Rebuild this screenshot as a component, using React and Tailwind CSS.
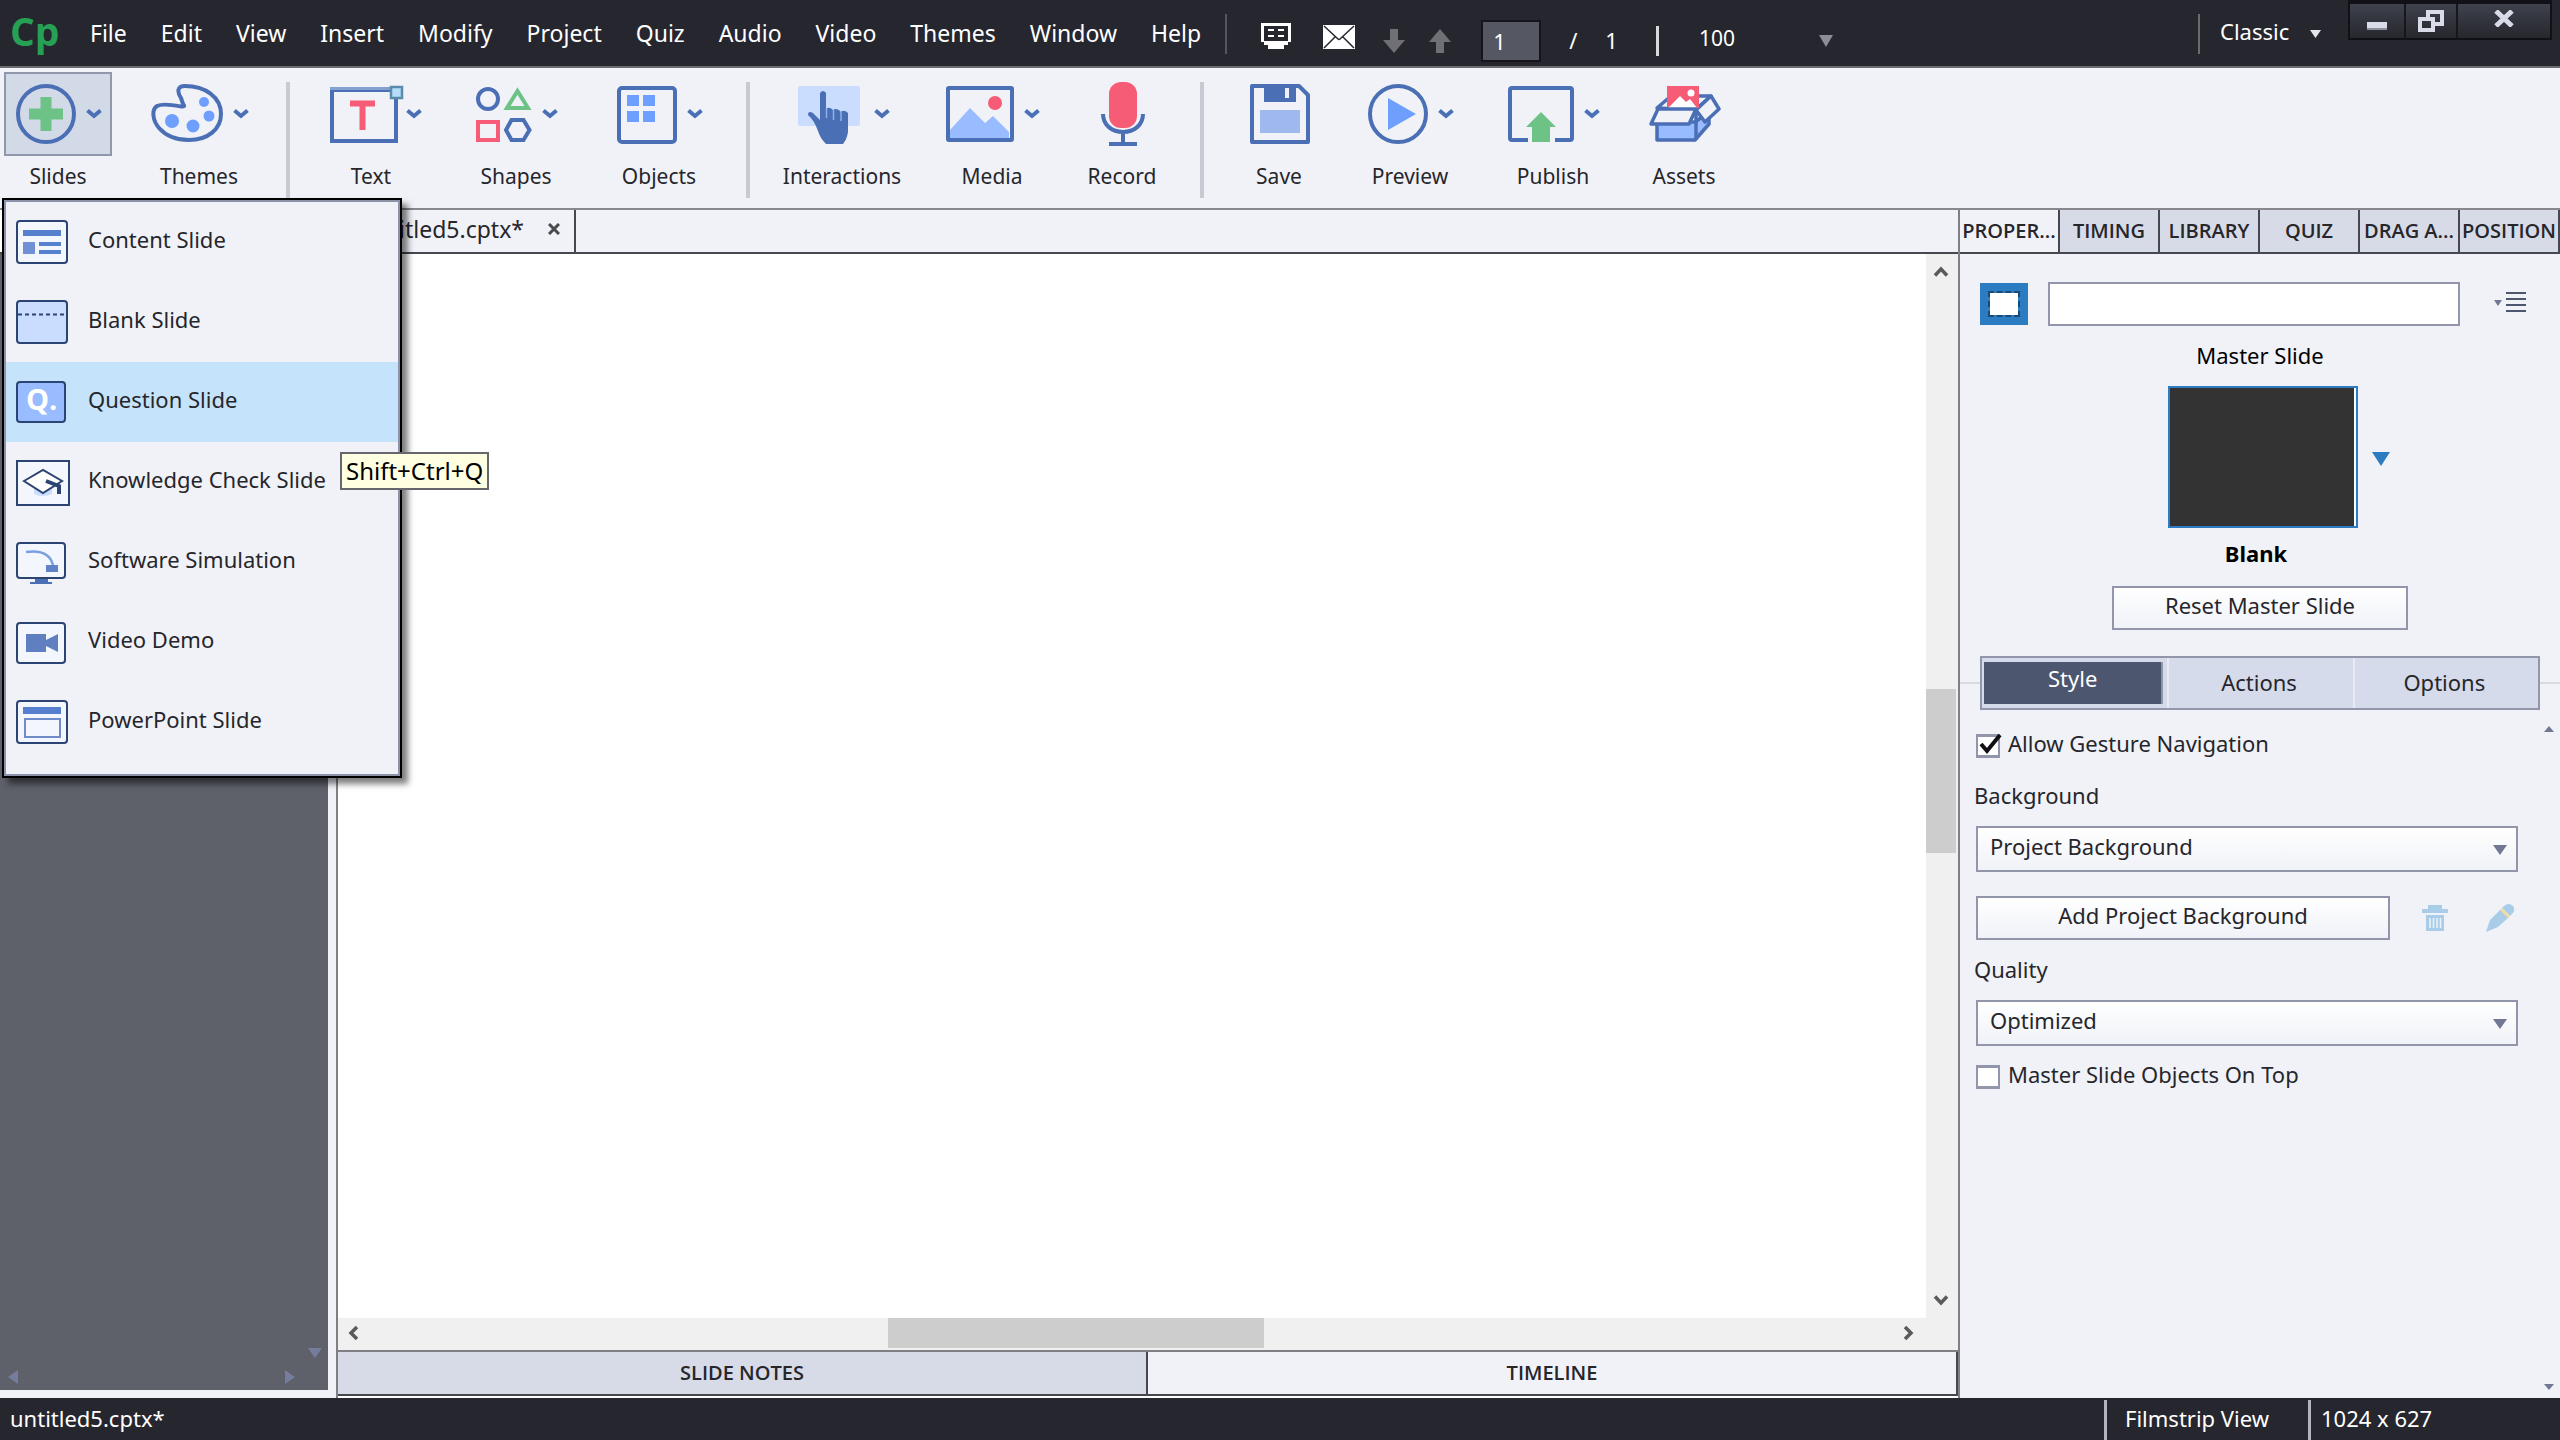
import React from "react";

const MENUS = ["File", "Edit", "View", "Insert", "Modify", "Project", "Quiz", "Audio", "Video", "Themes", "Window", "Help"];
const PANEL_TABS = ["PROPER...", "TIMING", "LIBRARY", "QUIZ", "DRAG A...", "POSITION"];

const Chevron = () => (
  <svg width="16" height="12" viewBox="0 0 16 12" className="shrink-0" fill="none" stroke="#4a6fb5" strokeWidth="4">
    <path d="M1.500 2.500 L8 8 L14.500 2.500" />
  </svg>
);

const Triangle = ({ className = "", dir = "down", w = 12, h = 8 }) => (
  <svg width={w} height={h} viewBox="0 0 10 10" preserveAspectRatio="none" className={className} fill="currentColor">
    <path d={{ down: "M0 0H10L5 10Z", up: "M0 10H10L5 0Z", left: "M10 0V10L0 5Z", right: "M0 0V10L10 5Z" }[dir]} />
  </svg>
);

const ScrollArrow = ({ dir }) => (
  <svg width="16" height="16" viewBox="0 0 16 16" fill="none" stroke="#5a5a5a" strokeWidth="3.500">
    <path d={{ up: "M2 11.500L8 5L14 11.500", down: "M2 4.500L8 11L14 4.500", left: "M11 2L5 8L11 14", right: "M5 2L11 8L5 14" }[dir]} />
  </svg>
);

/* Toolbar drawings */
const SlidesIcon = () => (
  <svg width="60" height="60" viewBox="0 0 60 60">
    <circle cx="30" cy="30" r="28" fill="none" stroke="#4a6fb5" strokeWidth="4" />
    <path d="M30 13V47M13 30H47" stroke="#6dc286" strokeWidth="11" />
  </svg>
);
const ThemesIcon = () => (
  <svg width="72" height="60" viewBox="0 0 72 60">
    <path d="M32 20C34 22 33 23 30 22.500C22 21 12 19 6 22C0 26 2 37 8 44C15 52 26 56 38 56C57 56 70 45 70 30C70 13 54 2 34 2C26 2 26 8 30 14Z" fill="none" stroke="#4a6fb5" strokeWidth="4" />
    <g fill="#6e9fff">
      <circle cx="21" cy="37" r="7" />
      <circle cx="42" cy="42" r="6.500" />
      <circle cx="58" cy="32" r="5.500" />
      <circle cx="53" cy="18" r="5" />
    </g>
  </svg>
);
const TextIcon = () => (
  <svg width="66" height="60" viewBox="0 0 66 60" className="overflow-visible">
    <rect x="2" y="6" width="64" height="51" fill="none" stroke="#4a6fb5" strokeWidth="4" />
    <path d="M0 4.500H62" stroke="#86a0d0" strokeWidth="3" />
    <rect x="61" y="3" width="11" height="11" fill="#b5dcf8" stroke="#5a8bab" strokeWidth="2.500" />
    <path d="M20 19.500H45M32.500 18V46" stroke="#f65c75" strokeWidth="6" />
  </svg>
);
const ShapesIcon = () => (
  <svg width="56" height="60" viewBox="0 0 56 60" fill="none" strokeWidth="4">
    <circle cx="12" cy="15" r="10" stroke="#4a6fb5" />
    <path d="M41.500 7L52 24H31Z" stroke="#6dc286" />
    <rect x="2" y="38" width="20" height="18" stroke="#f65c75" />
    <path d="M35.500 36H47.500L53.500 46L47.500 56H35.500L30 46Z" stroke="#4a6fb5" />
  </svg>
);
const ObjectsIcon = () => (
  <svg width="60" height="60" viewBox="0 0 60 60">
    <rect x="2" y="4" width="56" height="54" rx="3" fill="none" stroke="#4a6fb5" strokeWidth="4" />
    <path d="M10 11H22V22H10ZM26 11H38V22H26ZM10 27H22V38H10ZM26 27H38V38H26Z" fill="#6e9fff" />
  </svg>
);
const HandIcon = () => (
  <svg width="66" height="60" viewBox="0 0 66 60">
    <rect x="0" y="2" width="62" height="40" rx="2" fill="#cbddff" />
    <path d="M22 9Q25 5 28 9V25Q31 22 35 26Q39 23 43 28Q46 25 50 29V48Q49 55 45 60H28Q22 54 20 47Q16 36 10 31Q10 26 15 29L22 36Z" fill="#4a6fb5" />
    <path d="M28.500 24V34M35.500 26V36M43 28V37" stroke="#8fb0e8" strokeWidth="1.500" />
  </svg>
);
const MediaIcon = () => (
  <svg width="68" height="60" viewBox="0 0 68 60">
    <path d="M4 46L24 24L39 39L47 32L63 48V54H4Z" fill="#99bbff" />
    <circle cx="49" cy="19" r="7" fill="#f65c75" />
    <rect x="2" y="4" width="64" height="52" rx="1" fill="none" stroke="#4a6fb5" strokeWidth="4" />
  </svg>
);
const RecordIcon = () => (
  <svg width="44" height="66" viewBox="0 0 44 66">
    <rect x="8" y="1" width="28" height="46" rx="12" fill="#f65c75" />
    <path d="M2 33C2 44 11 51 22 51S42 44 42 33M22 51V63M8 63H36" fill="none" stroke="#4a6fb5" strokeWidth="4" />
  </svg>
);
const SaveIcon = () => (
  <svg width="60" height="60" viewBox="0 0 60 60">
    <path d="M2 2H49L58 11V58H2Z" fill="none" stroke="#4a6fb5" strokeWidth="4" strokeLinejoin="round" />
    <rect x="14" y="2" width="32" height="16" fill="#4a6fb5" />
    <rect x="35" y="4" width="4" height="10" fill="#eef1fa" />
    <rect x="10" y="26" width="40" height="23" fill="#9fb9ee" />
  </svg>
);
const PreviewIcon = () => (
  <svg width="60" height="60" viewBox="0 0 60 60">
    <circle cx="30" cy="30" r="28" fill="none" stroke="#4a6fb5" strokeWidth="4" />
    <path d="M20 14L48 30L20 46Z" fill="#6e9fff" />
  </svg>
);
const PublishIcon = () => (
  <svg width="66" height="60" viewBox="0 0 66 60">
    <path d="M20 56H4Q2 56 2 54V6Q2 4 4 4H62Q64 4 64 6V54Q64 56 62 56H47" fill="none" stroke="#4a6fb5" strokeWidth="4" />
    <path d="M33 28L48 43H42V58H24V43H18Z" fill="#6dc286" />
  </svg>
);
const AssetsIcon = () => (
  <svg width="72" height="60" viewBox="0 0 72 60" strokeLinejoin="round">
    <path d="M8 38H46L60 28V40L46 56H8Z" fill="#99bbff" stroke="#4a6fb5" strokeWidth="3.500" />
    <path d="M8 24L22 12H62L46 26Z" fill="#f0f2f8" stroke="#4a6fb5" strokeWidth="3.500" />
    <path d="M62 12L70 25L56 38L47 26Z" fill="#f0f2f8" stroke="#4a6fb5" strokeWidth="3.500" />
    <path d="M18 2H50V24H18Z" fill="#f65c75" />
    <path d="M19 24L31 12L37 18L41 15L48 24Z" fill="#fff" />
    <circle cx="42" cy="9" r="3.500" fill="#fff" />
    <path d="M9 25H47L40 40H2Z" fill="#f0f2f8" stroke="#4a6fb5" strokeWidth="3.500" />
    <path d="M47 26V56" stroke="#4a6fb5" strokeWidth="3.500" />
  </svg>
);

const TOOLS = [
  { label: "Slides", Icon: SlidesIcon, width: "w-[108px]", chevron: true, active: true },
  { label: "Themes", Icon: ThemesIcon, width: "w-[174px]", chevron: true },
  { divider: "mr-0" },
  { label: "Text", Icon: TextIcon, width: "w-[162px]", chevron: true, inset: "pl-2.5" },
  { label: "Shapes", Icon: ShapesIcon, width: "w-32", chevron: true },
  { label: "Objects", Icon: ObjectsIcon, width: "w-[158px]", chevron: true },
  { divider: "ml-2" },
  { label: "Interactions", Icon: HandIcon, width: "w-[184px]", chevron: true, inset: "pl-1" },
  { label: "Media", Icon: MediaIcon, width: "w-[116px]", chevron: true },
  { label: "Record", Icon: RecordIcon, width: "w-36" },
  { divider: "ml-1.5" },
  { label: "Save", Icon: SaveIcon, width: "w-[150px]" },
  { label: "Preview", Icon: PreviewIcon, width: "w-28", chevron: true },
  { label: "Publish", Icon: PublishIcon, width: "w-[174px]", chevron: true },
  { label: "Assets", Icon: AssetsIcon, width: "w-[88px]" },
];

/* Slide menu drawings */
const Frame = ({ children, fill = "#f4f6fd" }) => (
  <svg width="54" height="46" viewBox="0 0 54 46">
    <rect x="1" y="1" width="50" height="42" rx="3" fill={fill} stroke="#2b4474" strokeWidth="2" />
    {children}
  </svg>
);
const ContentGlyph = () => (
  <Frame>
    <path d="M7 10H45V16H7ZM23 22H45V26H23ZM23 30H45V34H23Z" fill="#567fce" />
    <path d="M7 22H19V34H7Z" fill="#7190d2" />
  </Frame>
);
const BlankGlyph = () => (
  <Frame fill="#cbddff">
    <path d="M2 14.500H50" stroke="#2b4474" strokeWidth="2" strokeDasharray="4 3" />
  </Frame>
);
const QuestionGlyph = () => (
  <svg width="54" height="46" viewBox="0 0 54 46">
    <rect x="1" y="2" width="48" height="40" rx="3" fill="#99bbff" stroke="#2b4474" strokeWidth="2" />
    <text x="10" y="30" fontFamily="Open Sans, sans-serif" fontSize="29" fontWeight="700" fill="#fff">Q.</text>
  </svg>
);
const CapGlyph = () => (
  <svg width="54" height="46" viewBox="0 0 54 46">
    <rect x="1" y="1" width="52" height="44" fill="#f4f6fd" stroke="#2b4474" strokeWidth="2" />
    <path d="M18 27H36V34Q27 38 18 34Z" fill="#cbddff" />
    <path d="M8 21L27 10L46 21L27 33Z" fill="#fff" stroke="#2b4474" strokeWidth="2" />
    <path d="M30 21L43 26V34" fill="none" stroke="#2b4474" strokeWidth="4" />
  </svg>
);
const SimulationGlyph = () => (
  <svg width="54" height="46" viewBox="0 0 54 46">
    <rect x="1" y="3" width="48" height="35" rx="3" fill="#f4f6fd" stroke="#2b4474" strokeWidth="2" />
    <path d="M10 12C24 10 34 13 37 25" fill="none" stroke="#7ba0e2" strokeWidth="2.500" />
    <path d="M30 25H42V32H30Z" fill="#5f82c4" />
    <path d="M19 39H32V42H36V44H14V42H19Z" fill="#4a6fb5" />
  </svg>
);
const VideoGlyph = () => (
  <svg width="54" height="46" viewBox="0 0 54 46">
    <rect x="1" y="3" width="48" height="40" rx="3" fill="#f4f6fd" stroke="#2b4474" strokeWidth="2" />
    <path d="M10 14H30V20L42 14V32L30 26V32H10Z" fill="#5f7fc0" />
  </svg>
);
const PowerPointGlyph = () => (
  <Frame>
    <path d="M7 7H45V14H7Z" fill="#567fce" />
    <rect x="9" y="19" width="35" height="18" fill="none" stroke="#6f8cc8" strokeWidth="2" />
  </Frame>
);

const SLIDE_ITEMS = [
  ["Content Slide", ContentGlyph],
  ["Blank Slide", BlankGlyph],
  ["Question Slide", QuestionGlyph],
  ["Knowledge Check Slide", CapGlyph],
  ["Software Simulation", SimulationGlyph],
  ["Video Demo", VideoGlyph],
  ["PowerPoint Slide", PowerPointGlyph],
];

function TopBar() {
  return (
    <header className="flex h-[68px] shrink-0 items-start border-b-2 border-[#6a6a70] bg-[#26262f] text-white">
      <div className="w-[90px] pl-2.5 text-[39px] leading-[62px] font-bold text-[#26a055] [font-family:'Open_Sans',sans-serif]">Cp</div>
      <nav className="flex gap-[34px] text-[23px] leading-[66px]">
        {MENUS.map((m) => (
          <button key={m} type="button">{m}</button>
        ))}
      </nav>
      <div className="mt-3.5 ml-6 h-10 w-0.5 bg-[#55555e]" />
      <div className="flex h-[66px] items-center">
        <button type="button" aria-label="Live chat" className="ml-[34px] pt-1.5">
          <svg width="30" height="26" viewBox="0 0 30 26">
            <path d="M0 0H30V19H27V22H23V26H7V22H3V19H0Z" fill="#fff" />
            <path d="M3 3H27V18H3Z" fill="#26262f" />
            <path d="M7 6H13V8H7ZM17 6H23V8H17ZM7 12H13V14H7ZM17 12H23V14H17Z" fill="#fff" />
          </svg>
        </button>
        <button type="button" aria-label="Mail" className="ml-8 pt-2">
          <svg width="32" height="24" viewBox="0 0 32 24">
            <path d="M0 0H32V24H0Z" fill="#fff" />
            <path d="M1 1L15 14Q16 15 17 14L31 1M1 23L12 12M31 23L20 12" fill="none" stroke="#26262f" strokeWidth="1.500" />
          </svg>
        </button>
        <button type="button" aria-label="Next slide" className="ml-7 pt-4">
          <svg width="22" height="24" viewBox="0 0 22 24"><path d="M7 0H15V11H22L11 24L0 11H7Z" fill="#6f6f75" /></svg>
        </button>
        <button type="button" aria-label="Previous slide" className="ml-6 pt-4">
          <svg width="22" height="24" viewBox="0 0 22 24"><path d="M7 24H15V13H22L11 0L0 13H7Z" fill="#6f6f75" /></svg>
        </button>
        <input aria-label="Slide number" defaultValue="1" className="mt-4 ml-[30px] h-[42px] w-[60px] border-2 border-[#15151b] bg-[#555762] px-2.5 text-[22px] leading-[30px] text-white" />
        <span className="ml-7 pt-3.5 text-[22px]">/</span>
        <span className="ml-7 pt-3.5 text-[22px]">1</span>
        <div className="mt-4 ml-[38px] h-[30px] w-[3px] bg-[#d8d8dc]" />
        <button type="button" aria-label="Zoom" className="ml-10 flex items-center pt-3 text-[21px]">
          100
          <Triangle w={14} h={12} className="mt-1 ml-[84px] text-[#8d8d96]" />
        </button>
      </div>
      <div className="mt-3.5 ml-auto h-10 w-0.5 bg-[#6a6a70]" />
      <button type="button" className="flex w-[148px] items-center pl-5 text-[22px] leading-[62px]">
        Classic <Triangle w={11} h={8} className="mt-1.5 ml-[21px] text-[#e4e4ea]" />
      </button>
      <div className="mr-2 flex h-10 border-2 border-t-4 border-[#101016] bg-linear-to-b from-[#3f424c] to-[#26272e] text-[#d9dbe8]">
        <button type="button" aria-label="Minimize" className="flex w-[54px] justify-center pt-[18px]">
          <svg width="20" height="8" viewBox="0 0 20 8"><path d="M0 0H20V8H0Z" fill="#8d8f9d" /><path d="M0 0H20V6H0Z" fill="currentColor" /></svg>
        </button>
        <button type="button" aria-label="Restore" className="flex w-[54px] justify-center border-x-2 border-[#16161c] pt-1.5">
          <svg width="26" height="22" viewBox="0 0 26 22" fill="none" stroke="currentColor" strokeWidth="4"><path d="M10 8V2H24V14H17M2 9H15V20H2Z" /></svg>
        </button>
        <button type="button" aria-label="Close" className="flex w-[92px] justify-center pt-1.5">
          <svg width="22" height="17" viewBox="0 0 22 17" fill="none" stroke="currentColor" strokeWidth="5"><path d="M3 1L19 16M19 1L3 16" /></svg>
        </button>
      </div>
    </header>
  );
}

function Toolbar() {
  return (
    <div className="flex h-[142px] shrink-0 border-b-2 border-[#87878e] bg-[#f0f2f8] pt-1 pl-1">
      {TOOLS.map((t, i) =>
        t.divider ? (
          <div key={i} className={`mt-2.5 h-[116px] w-1 shrink-0 bg-[#c7c9d3] ${t.divider}`} />
        ) : (
          <button key={i} type="button" className={`flex shrink-0 flex-col items-stretch text-[21px] ${t.width}`}>
            <span className={`flex h-[84px] items-center justify-center gap-2.5 ${t.inset || "pl-0.5"} ${t.active ? "border-2 border-[#9298ac] bg-[#d2d9e7]" : ""}`}>
              <t.Icon />
              {t.chevron && <Chevron />}
            </span>
            <span className="pt-1 text-center leading-8">{t.label}</span>
          </button>
        )
      )}
    </div>
  );
}

function SlidesMenu() {
  return (
    <div className="absolute top-[198px] left-0.5 z-10 w-[400px] border-2 border-black bg-[#f0f2f8] shadow-[6px_6px_6px_rgba(0,0,0,0.5)]">
      <ul className="border-2 border-[#8d92a8] pb-3">
        {SLIDE_ITEMS.map(([label, Glyph]) => (
          <li key={label}>
            <button type="button" className={`flex h-20 w-full items-center gap-[18px] pt-0.5 pl-2.5 text-left text-[22px] ${label === "Question Slide" ? "bg-[#c5e3fa]" : ""}`}>
              <Glyph />
              <span className="pb-2 whitespace-nowrap">{label}</span>
            </button>
          </li>
        ))}
      </ul>
      <div role="tooltip" className="absolute top-[252px] left-[336px] border-2 border-[#66666c] bg-[#ffffe1] px-1 text-[24px] leading-[34px] whitespace-nowrap text-black">
        Shift+Ctrl+Q
      </div>
    </div>
  );
}

function Filmstrip() {
  return (
    <aside aria-label="Filmstrip" className="flex w-[336px] shrink-0 flex-col bg-[#f0f2f8] pr-2 pb-2">
      <div className="h-11 shrink-0 border-b-2 border-[#474750] bg-white" />
      <div className="flex flex-1 flex-col justify-end bg-[#5e6169] text-[#767d9c]">
        <Triangle w={14} h={10} className="mr-1.5 self-end" />
        <div className="flex justify-between pt-3 pr-[33px] pb-1.5 pl-2">
          <Triangle dir="left" w={10} h={14} />
          <Triangle dir="right" w={10} h={14} />
        </div>
      </div>
    </aside>
  );
}

function Stage() {
  return (
    <main className="flex min-w-0 flex-1 flex-col border-x-2 border-[#808084] bg-[#f0f2f8]">
      <div className="flex h-11 shrink-0 border-b-2 border-[#474750]">
        <div className="flex w-[238px] items-center justify-end gap-6 border-r-2 border-[#474750] pr-3.5 pb-1">
          <span className="text-[23px]">untitled5.cptx*</span>
          <button type="button" aria-label="Close document">
            <svg width="12" height="12" viewBox="0 0 12 12" stroke="#4a4a4a" strokeWidth="3"><path d="M1 1L11 11M11 1L1 11" /></svg>
          </button>
        </div>
      </div>
      <div className="flex min-h-0 flex-1">
        <div className="flex-1 bg-white" />
        <div className="flex w-8 flex-col items-center bg-[#f0f0f0] py-2.5 pr-0.5">
          <ScrollArrow dir="up" />
          <div className="flex-[408_1_0%]" />
          <div className="h-[164px] w-full bg-[#cdcdcd]" />
          <div className="flex-[438_1_0%]" />
          <ScrollArrow dir="down" />
        </div>
      </div>
      <div className="flex h-8 shrink-0 items-center bg-[#f0f0f0] pr-[42px] pb-0.5 pl-2">
        <ScrollArrow dir="left" />
        <div className="flex-[525_1_0%]" />
        <div className="h-[30px] w-[376px] bg-[#cdcdcd]" />
        <div className="flex-[635_1_0%]" />
        <ScrollArrow dir="right" />
      </div>
      <div className="flex h-12 shrink-0 border-t-2 border-[#808084] bg-white pb-0.5 text-[20px] font-semibold text-[#26262b] [font-family:'Open_Sans',sans-serif]">
        <button type="button" className="flex-1 border-r-2 border-b-2 border-[#474750] bg-[#d7dbe7]">SLIDE NOTES</button>
        <button type="button" className="flex-1 border-r-2 border-b-2 border-[#474750] bg-[#f0f2f8]">TIMELINE</button>
      </div>
    </main>
  );
}

function Select({ label, value }) {
  return (
    <label className="block">
      <span className="block leading-7">{label}</span>
      <span className="relative mt-[17px] ml-0.5 block">
        <select className="block h-[46px] w-full appearance-none border-2 border-[#9196ab] bg-linear-to-b from-white to-[#f0f2f8] px-3 pb-1.5">
          <option>{value}</option>
        </select>
        <Triangle w={14} h={10} className="pointer-events-none absolute top-[19px] right-[11px] text-[#727893]" />
      </span>
    </label>
  );
}

function Check({ label, checked }) {
  return (
    <label className="flex items-center gap-2 pl-0.5 leading-[26px]">
      <span className="relative block size-6">
        <input type="checkbox" defaultChecked={checked} className="peer block size-6 appearance-none border-2 border-y-3 border-[#9196ab] bg-white" />
        <svg width="26" height="24" viewBox="0 0 26 24" className="pointer-events-none absolute top-0 left-0 hidden peer-checked:block" fill="none" stroke="#101014" strokeWidth="4">
          <path d="M5 10L11 17L24 1" />
        </svg>
      </span>
      <span className="pb-1.5">{label}</span>
    </label>
  );
}

function Properties() {
  return (
    <aside aria-label="Properties" className="flex w-[600px] shrink-0 flex-col bg-[#f0f2f8] text-[22px]">
      <div className="flex h-11 shrink-0 border-b-2 border-[#474750] text-[20px] font-semibold [font-family:'Open_Sans',sans-serif]">
        {PANEL_TABS.map((t, i) => (
          <button key={t} type="button" className={`flex w-0 flex-1 items-center justify-center border-r-2 border-[#474750] whitespace-nowrap ${i ? "bg-[#d7dbe7]" : ""}`}>
            {t}
          </button>
        ))}
      </div>
      <div className="flex items-center pt-7 pl-5">
        <span className="flex h-[42px] w-12 items-center justify-center bg-[#2b7cc0]">
          <span className="h-[26px] w-8 border-2 border-dashed border-[#174a76] bg-white bg-clip-padding" />
        </span>
        <input aria-label="Slide name" className="ml-5 h-11 w-[412px] border-2 border-[#9196ab] bg-white px-2" />
        <button type="button" aria-label="Panel options" className="ml-[34px] flex items-center gap-1 pb-0.5">
          <Triangle w={8} h={6} className="text-[#727893]" />
          <svg width="20" height="22" viewBox="0 0 20 22"><path d="M0 0H20V2H0ZM0 6H20V8H0ZM0 12H20V14H0ZM0 18H20V20H0Z" fill="#4c566e" /></svg>
        </button>
      </div>
      <div className="flex flex-col items-center pt-3.5">
        <span className="leading-[30px] text-black">Master Slide</span>
        <div className="mt-4 flex items-center pl-[38px]">
          <div className="h-[142px] w-[190px] border-2 border-[#2b7cc0] bg-white pr-0.5">
            <div className="h-full bg-[#333]" />
          </div>
          <button type="button" aria-label="Choose master slide" className="ml-3.5 pt-1">
            <Triangle w={18} h={14} className="text-[#2b7cc0]" />
          </button>
        </div>
        <span className="mt-2.5 pr-2 leading-[30px] font-bold text-black">Blank</span>
        <button type="button" className="mt-[18px] h-11 w-[296px] border-2 border-[#9196ab] bg-linear-to-b from-white to-[#f0f2f8] pb-1.5">Reset Master Slide</button>
      </div>
      <div className="mt-[26px] flex items-center">
        <div className="h-0.5 w-5 bg-[#d9dae0]" />
        <div role="tablist" className="flex h-[54px] flex-1 border-2 border-[#9196ab] bg-[#d5dbea]">
          <div className="flex w-0 flex-1 py-1 pr-1 pl-0.5">
            <button type="button" role="tab" aria-selected="true" className="w-full border-r-2 border-[#9196ab] bg-[#4c566e] pb-2.5 text-white">Style</button>
          </div>
          <button type="button" role="tab" aria-selected="false" className="w-0 flex-1 border-l-2 border-[#e8ebf4] pr-1 pb-0.5">Actions</button>
          <button type="button" role="tab" aria-selected="false" className="w-0 flex-1 border-l-2 border-[#e8ebf4] pr-1 pb-0.5">Options</button>
        </div>
        <div className="h-0.5 w-5 bg-[#d9dae0]" />
      </div>
      <div className="flex flex-1 justify-between pt-4">
        <div className="flex w-[560px] flex-col pl-3.5">
          <div className="pt-1"><Check label="Allow Gesture Navigation" checked /></div>
          <div className="pt-[19px] pr-0.5"><Select label="Background" value="Project Background" /></div>
          <div className="flex items-center pt-6 pl-0.5">
            <button type="button" className="h-11 w-[414px] border-2 border-[#9196ab] bg-linear-to-b from-white to-[#f0f2f8] pb-1.5">Add Project Background</button>
            <button type="button" aria-label="Delete background" className="ml-8">
              <svg width="26" height="26" viewBox="0 0 26 26" fill="#a9cde8"><path d="M6 0H20V4H26V8H0V4H6ZM4 10H22V26H4Z" /><path d="M8 13V23M11.500 13V23M15 13V23M18.500 13V23" stroke="#f0f2f8" strokeWidth="1.500" /></svg>
            </button>
            <button type="button" aria-label="Edit background" className="ml-[38px]">
              <svg width="28" height="28" viewBox="0 0 28 28"><path d="M0 28L4 16L15 5L23 13L12 23Z" fill="#a9cde8" /><path d="M18 2Q23 -2 27 2Q30 6 26 10L24 12L16 4Z" fill="#a9cde8" /><path d="M14 6L16 4L24 12L22 14Z" fill="#f0dca0" /></svg>
            </button>
          </div>
          <div className="pt-[15px] pr-0.5"><Select label="Quality" value="Optimized" /></div>
          <div className="pt-[15px]"><Check label="Master Slide Objects On Top" /></div>
        </div>
        <div className="flex flex-col justify-between pr-1.5 pb-2 text-[#727893]">
          <Triangle dir="up" w={10} h={6} />
          <Triangle w={10} h={6} />
        </div>
      </div>
    </aside>
  );
}

export default function App() {
  return (
    <div className="relative flex h-screen flex-col overflow-hidden bg-[#f0f2f8] text-[#26262b] [font-family:'Noto_Sans',sans-serif]">
      <TopBar />
      <Toolbar />
      <div className="flex min-h-0 flex-1">
        <Filmstrip />
        <Stage />
        <Properties />
      </div>
      <footer className="flex h-[42px] shrink-0 bg-[#26262f] text-[22px] leading-10 text-white">
        <span className="flex-1 pl-2.5">untitled5.cptx*</span>
        <span className="mt-0.5 w-[204px] border-l-3 border-[#b4b4bc] pl-[18px] leading-9">Filmstrip View</span>
        <span className="mt-0.5 w-[252px] border-l-3 border-[#b4b4bc] pl-2.5 leading-9">1024 x 627</span>
      </footer>
      <SlidesMenu />
    </div>
  );
}
